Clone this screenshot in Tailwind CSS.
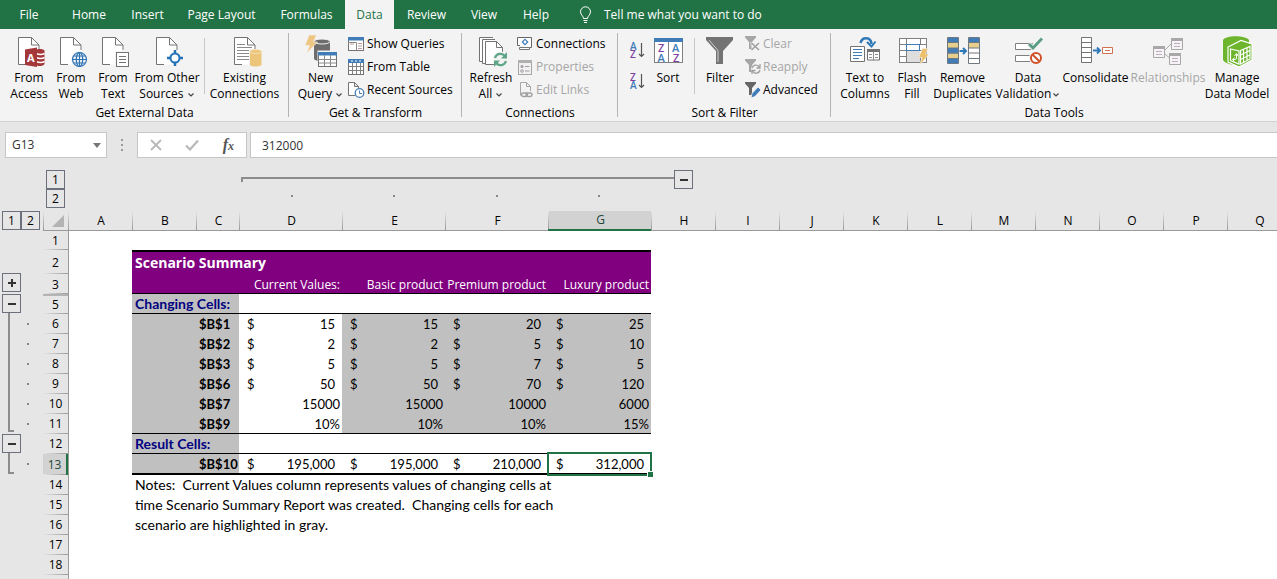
<!DOCTYPE html>
<html lang="en">
<head>
<meta charset="utf-8">
<title>Scenario Summary</title>
<script src="https://cdn.jsdelivr.net/npm/@tailwindcss/browser@4"></script>
</head>
<body class="flex h-screen flex-col overflow-hidden bg-[#e6e6e6] font-['Open_Sans','Noto_Sans',sans-serif] text-xs text-black">

<svg class="hidden">
  <defs>
    <symbol id="page" viewBox="0 0 32 32"><path d="M5.5 1.5H18.5L26.500 9.500V28.500H5.500Z" fill="#fff"/><path d="M5.500 28.500V1.500H18.500L26 9V14M18.500 1.500V9H26M5.500 28.500H13" fill="none" stroke="#737373"/></symbol>
    <symbol id="funnel" viewBox="0 0 16 16"><path d="M0 0H11V1.500L7 6V13H4V6L0 1.500Z"/></symbol>
    <symbol id="down" viewBox="0 0 8 6"><path d="M1.500 1.500L4 4L6.500 1.500" fill="none" stroke="#444" stroke-width="1.200"/></symbol>
  </defs>
</svg>

<nav class="flex h-[29px] shrink-0 items-stretch bg-[#217346] text-white">
  <button class="w-[58px]">File</button>
  <button class="w-[62px]">Home</button>
  <button class="w-[55px]">Insert</button>
  <button class="w-[93px]">Page Layout</button>
  <button class="w-[77px]">Formulas</button>
  <button class="w-[49px] bg-[#f3f3f3] text-[#217346]">Data</button>
  <button class="w-[65px]">Review</button>
  <button class="w-[50px]">View</button>
  <button class="w-[54px]">Help</button>
  <button class="flex items-center gap-3 pl-4">
    <svg class="h-[18px] w-[13px]" viewBox="0 0 13 18" fill="none" stroke="#fff"><path d="M4.500 12.500C4.500 10 1.500 9 1.500 5.800A5 5 0 0 1 11.500 5.800C11.500 9 8.500 10 8.500 12.500ZM4.500 14.500H8.500M5 16.500H8"/></svg>
    <span>Tell me what you want to do</span>
  </button>
</nav>

<div class="flex h-[93px] shrink-0 border-b border-[#d2d2d2] bg-[#f3f3f3] leading-4">

  <section class="flex w-[289px] shrink-0 flex-col" aria-label="Get External Data">
    <div class="flex h-[76px] pl-2 pt-[7px]">
      <button class="flex w-[42px] flex-col items-center gap-[2px] whitespace-nowrap">
        <svg class="size-8 shrink-0 overflow-visible" viewBox="0 0 32 32"><use href="#page"/><path d="M23 14C25 12.500 30 12.500 31.500 14.500V28C30 30.500 25 30.500 23 29Z" fill="#a4373a"/><path d="M23 17.500Q28 19.500 31.500 17.500M23 21.500Q28 23.500 31.500 21.500M23 25.500Q28 27.500 31.500 25.500" stroke="#fff" stroke-width="1.500" fill="none"/><path d="M12 13.500L24 11.500V31L12 29Z" fill="#a4373a"/><text x="14" y="26" font-size="11" font-weight="700" fill="#fff">A</text></svg>
        <span>From<br>Access</span></button>
      <button class="flex w-[42px] flex-col items-center gap-[2px] whitespace-nowrap">
        <svg class="size-8 shrink-0 overflow-visible" viewBox="0 0 32 32"><use href="#page"/><circle cx="24.500" cy="23.500" r="8.500" fill="#f3f3f3"/><g fill="none" stroke="#2e75b6" stroke-width="1.200"><circle cx="24.500" cy="23.500" r="7"/><ellipse cx="24.500" cy="23.500" rx="3.200" ry="7"/><path d="M24.500 16.500V30.500M17.500 23.500H31.500M18.500 20H30.500M18.500 27H30.500"/></g></svg>
        <span>From<br>Web</span></button>
      <button class="flex w-[42px] flex-col items-center gap-[2px] whitespace-nowrap">
        <svg class="size-8 shrink-0 overflow-visible" viewBox="0 0 32 32"><use href="#page"/><path d="M18 15H32V31H18Z" fill="#f3f3f3"/><rect x="19.500" y="16.500" width="12" height="14" fill="#fff" stroke="#737373"/><path d="M22 20.500H29M22 23.500H29M22 26.500H29" stroke="#737373"/></svg>
        <span>From<br>Text</span></button>
      <button class="flex w-[66px] flex-col items-center gap-[2px] whitespace-nowrap">
        <svg class="size-8 shrink-0 overflow-visible" viewBox="0 0 32 32"><use href="#page"/><circle cx="24" cy="22" r="6.500" fill="#f3f3f3"/><g stroke="#2272b9" stroke-width="2" fill="none"><circle cx="24" cy="22" r="4.500" fill="#fff"/><path d="M24 14V18M24 26V30M16 22H20M28 22H32" stroke-width="2.500"/></g></svg>
        <span>From Other<br>Sources <svg class="inline h-[6px] w-2"><use href="#down"/></svg></span></button>
      <span class="mx-1 mt-[2px] h-14 w-px bg-[#c8c8c8]"></span>
      <button class="flex w-[71px] flex-col items-center gap-[2px] whitespace-nowrap">
        <svg class="size-8 shrink-0 overflow-visible" viewBox="0 0 32 32"><use href="#page"/><path d="M8 8.500H16M8 11.500H23M8 14.500H20M8 17.500H20M8 20.500H20M8 23.500H20" stroke="#8a8a8a"/><path d="M20 13H33V31H20Z" fill="#f3f3f3"/><path d="M21 15.500V29C23 31 30 31 32.500 29V15.500Z" fill="#ecc57a"/><ellipse cx="26.750" cy="15.500" rx="5.750" ry="2" fill="#ecc57a" stroke="#f8e6c0" stroke-width=".8"/></svg>
        <span>Existing<br>Connections</span></button>
    </div>
    <h2 class="pt-px text-center">Get External Data</h2>
  </section>
  <span class="-ml-px mt-1 h-[84px] w-px shrink-0 bg-[#b4b4b4]"></span>

  <section class="flex w-[173px] shrink-0 flex-col" aria-label="Get and Transform">
    <div class="flex h-[76px] pl-[10px]">
      <button class="flex w-[43px] flex-col items-center gap-[2px] whitespace-nowrap pt-[7px]">
        <svg class="size-8 shrink-0 overflow-visible" viewBox="0 0 32 32"><path d="M9 5V23C11 26 23 26 25 23V5Z" fill="#6d6d6d"/><ellipse cx="17" cy="5.500" rx="8" ry="2.500" fill="#6d6d6d" stroke="#f3f3f3"/><path d="M4-1H11.500L8.500 6H12.500L1.500 17.500L4.500 9.500H0Z" fill="#eec684" stroke="#f3f3f3" stroke-width=".6"/><path d="M12.500 14.500H33V32H12.500Z" fill="#f3f3f3"/><rect x="13.500" y="16.500" width="18" height="14" fill="#fff" stroke="#737373"/><path d="M13 16H32V19.500H13Z" fill="#3f7cb8"/><path d="M19.500 19V30M25.500 19V30M14 23.500H31M14 27H31" stroke="#8a8a8a"/></svg>
        <span>New<br>Query <svg class="inline h-[6px] w-2"><use href="#down"/></svg></span></button>
      <div class="ml-[6px] flex flex-col pt-[3px]">
        <button class="flex h-[23px] items-center gap-[3px] whitespace-nowrap"><svg class="size-4" viewBox="0 0 16 16"><rect x=".5" y="1.500" width="15" height="13" fill="#fff" stroke="#737373"/><path d="M0 1H16V4.500H0Z" fill="#3f7cb8"/><path d="M2 8H6M10 7.500H14M10 10H14M10 12.500H14" stroke="#b99a9a"/><path d="M0 6.500H8.500V14" fill="none" stroke="#8a8a8a"/></svg>Show Queries</button>
        <button class="flex h-[23px] items-center gap-[3px] whitespace-nowrap"><svg class="size-4" viewBox="0 0 16 16"><rect x=".5" y=".5" width="15" height="15" fill="#fff" stroke="#737373"/><path d="M0 0H16V4H0Z" fill="#3f7cb8"/><path d="M4.500 4V15M8.500 4V15M12.500 4V15M1 7.500H15M1 11.500H15" stroke="#808080"/><path d="M3 2H5M7 2H9M11 2H13" stroke="#fff"/></svg>From Table</button>
        <button class="flex h-[23px] items-center gap-[3px] whitespace-nowrap"><svg class="size-4 overflow-visible" viewBox="0 0 16 16"><path d="M7 13.500H.5V.5H6.500L10.500 4.500V6M6.500 .5V4.500H10.500" fill="#fff" stroke="#737373"/><circle cx="11.500" cy="11" r="4.300" fill="#fff" stroke="#4a7fb5" stroke-width="1.300"/><path d="M11.500 8.500V11.500H14" fill="none" stroke="#4a7fb5"/></svg>Recent Sources</button>
      </div>
    </div>
    <h2 class="pt-px text-center">Get &amp; Transform</h2>
  </section>
  <span class="-ml-px mt-1 h-[84px] w-px shrink-0 bg-[#b4b4b4]"></span>

  <section class="flex w-[156px] shrink-0 flex-col" aria-label="Connections">
    <div class="flex h-[76px] pl-2">
      <button class="flex w-[42px] flex-col items-center gap-[2px] whitespace-nowrap pt-[7px]">
        <svg class="size-8 shrink-0 overflow-visible" viewBox="0 0 32 32"><g fill="#fff" stroke="#737373"><path d="M7 25.500H4.500V1.500H18"/><path d="M10 27.500H7.500V3.500H20"/><path d="M10.500 28.500V5.500H21.500L27.500 11.500V28.500Z"/><path d="M21.500 5.500V11.500H27.500" fill="none"/></g><circle cx="25.500" cy="23.500" r="8" fill="#f3f3f3"/><g fill="none" stroke="#5fa688" stroke-width="2.200"><path d="M20 22A5.700 5.700 0 0 1 30 20M31 25A5.700 5.700 0 0 1 21 27"/></g><path d="M32 16V22.500H26ZM19 31V24.500H25Z" fill="#5fa688"/></svg>
        <span>Refresh<br>All <svg class="inline h-[6px] w-2"><use href="#down"/></svg></span></button>
      <div class="ml-[5px] flex flex-col pt-[3px]">
        <button class="flex h-[23px] items-center gap-[3px] whitespace-nowrap"><svg class="size-4" viewBox="0 0 16 16"><path d="M3 9.500H.5V1.500H14.500V11.500H12" fill="#fff" stroke="#666"/><path d="M2.500 13.500V11.500H12.500V13.500Z" fill="#fff" stroke="#777"/><path d="M8 2.500L11.500 6L8 9.500L4.500 6Z" fill="#3f7cb8"/><circle cx="8" cy="6" r="1.400" fill="#fff"/></svg>Connections</button>
        <button disabled class="flex h-[23px] items-center gap-[3px] whitespace-nowrap text-[#a6a6a6]"><svg class="size-4" viewBox="0 0 16 16"><rect x="1.500" y="1.500" width="13" height="14" fill="#f3f0f3" stroke="#a6a6a6"/><path d="M1 1H15V4H1Z" fill="#b0b0b0"/><circle cx="5" cy="7.500" r="1.500" fill="#a0a0a0"/><circle cx="5" cy="12" r="1.300" fill="none" stroke="#a0a0a0"/><path d="M8 7.500H12.500M8 12H12.500" stroke="#a0a0a0"/></svg>Properties</button>
        <button disabled class="flex h-[23px] items-center gap-[3px] whitespace-nowrap text-[#a6a6a6]"><svg class="size-4" viewBox="0 0 16 16"><path d="M3.500 10V.5H9.500L13.500 4.500V9M9.500 .5V4.500H13.500M3.500 10V13.500" fill="none" stroke="#a6a6a6"/><g fill="none" stroke="#a0a0a0" stroke-width="1.500"><rect x="4.500" y="11" width="6" height="3.500" rx="1.700"/><rect x="9" y="11" width="6" height="3.500" rx="1.700"/></g></svg>Edit Links</button>
      </div>
    </div>
    <h2 class="pt-px text-center">Connections</h2>
  </section>
  <span class="-ml-px mt-1 h-[84px] w-px shrink-0 bg-[#b4b4b4]"></span>

  <section class="flex w-[213px] shrink-0 flex-col" aria-label="Sort and Filter">
    <div class="flex h-[76px] pl-3">
      <div class="flex flex-col gap-[14px] pt-[13px]">
        <button aria-label="Sort A to Z"><svg class="h-[17px] w-4 overflow-visible" viewBox="0 0 16 17" font-size="10" font-weight="600"><text x="0" y="8" fill="#3f7cb8">A</text><text x="0" y="16" fill="#7e3f9e">Z</text><path d="M11.500 1V14.500M9 12L11.500 14.500L14 12" fill="none" stroke="#555" stroke-width="1.200"/></svg></button>
        <button aria-label="Sort Z to A"><svg class="h-[17px] w-4 overflow-visible" viewBox="0 0 16 17" font-size="10" font-weight="600"><text x="0" y="8" fill="#7e3f9e">Z</text><text x="0" y="16" fill="#3f7cb8">A</text><path d="M11.500 1V14.500M9 12L11.500 14.500L14 12" fill="none" stroke="#555" stroke-width="1.200"/></svg></button>
      </div>
      <button class="ml-[5px] flex w-[34px] flex-col items-center gap-[2px] pt-[7px]">
        <svg class="size-8 shrink-0 overflow-visible" viewBox="0 0 32 32" font-size="11" font-weight="600"><rect x="2.500" y="2.500" width="28" height="24" fill="#fff" stroke="#808080"/><path d="M2 2H31V6H2Z" fill="#3f7cb8"/><path d="M16.500 6V26" stroke="#808080"/><text x="6" y="15.500" fill="#7e3f9e">Z</text><text x="5.500" y="25.500" fill="#3f7cb8">A</text><text x="20" y="15.500" fill="#3f7cb8">A</text><text x="21" y="25.500" fill="#7e3f9e">Z</text></svg>
        <span>Sort</span></button>
      <span class="ml-[9px] mt-[9px] h-14 w-px bg-[#c8c8c8]"></span>
      <button class="ml-[9px] flex w-8 flex-col items-center gap-[2px] pt-[7px]">
        <svg class="size-8 shrink-0" viewBox="0 0 32 32"><path d="M2 1H29V4L19 15V28H12V15L2 4Z" fill="#737373"/><path d="M5 4L14 14.500V26" fill="none" stroke="#d0d0d0"/></svg>
        <span>Filter</span></button>
      <div class="ml-[9px] flex flex-col pt-[3px]">
        <button disabled class="flex h-[23px] items-center gap-[2px] whitespace-nowrap text-[#a6a6a6]"><svg class="size-4" viewBox="0 0 16 16"><use href="#funnel" fill="#a6a6a6"/><path d="M5 6H16V16H7Z" fill="#f3f3f3" opacity=".6"/><path d="M6.500 7L14 14M14 7L6.500 14" stroke="#a0a0a0" stroke-width="1.600"/></svg>Clear</button>
        <button disabled class="flex h-[23px] items-center gap-[2px] whitespace-nowrap text-[#a6a6a6]"><svg class="size-4" viewBox="0 0 16 16"><use href="#funnel" fill="#a6a6a6"/><circle cx="11" cy="10" r="5" fill="#f3f3f3"/><path d="M7 9A4 4 0 0 1 14.500 8.500M15 11A4 4 0 0 1 7.500 12M15 5V9H11.500M7 15V11.500H10.500" fill="none" stroke="#a0a0a0" stroke-width="1.300"/></svg>Reapply</button>
        <button class="flex h-[23px] items-center gap-[2px] whitespace-nowrap"><svg class="size-4" viewBox="0 0 16 16"><use href="#funnel" fill="#666"/><path d="M6 16L7 11.500L13 5L16 8L10 14.500Z" fill="#3f7cb8" stroke="#f3f3f3" stroke-width=".8"/></svg>Advanced</button>
      </div>
    </div>
    <h2 class="pt-px text-center">Sort &amp; Filter</h2>
  </section>
  <span class="-ml-px mt-1 h-[84px] w-px shrink-0 bg-[#b4b4b4]"></span>

  <section class="flex grow flex-col" aria-label="Data Tools">
    <div class="flex h-[76px] pl-[9px] pt-[7px]">
      <button class="flex w-[50px] flex-col items-center gap-[2px] whitespace-nowrap">
        <svg class="size-8 shrink-0 overflow-visible" viewBox="0 0 32 32"><path d="M1.500 10.500H15.500V25.500H1.500Z" fill="#fff" stroke="#737373"/><path d="M4 13.500H13M4 16.500H13M4 19.500H13M4 22.500H10" stroke="#3f7cb8"/><path d="M18.500 13.500H30.500V24H18.500Z" fill="#fff" stroke="#737373"/><path d="M18 13H31V16H18Z" fill="#737373"/><path d="M24.500 16V24M20 18.500H23M26 18.500H29M20 21.500H23M26 21.500H29" stroke="#8a8a8a"/><path d="M11.500 7C13 .5 22 .5 22.500 8" fill="none" stroke="#2f78b8" stroke-width="2.500"/><path d="M18 6L22.500 10.500L26.500 5.500" fill="none" stroke="#2f78b8" stroke-width="2"/></svg>
        <span>Text to<br>Columns</span></button>
      <button class="ml-[2px] flex w-10 flex-col items-center gap-[2px] whitespace-nowrap">
        <svg class="size-8 shrink-0 overflow-visible" viewBox="0 0 32 32"><rect x="3.500" y="2.500" width="27" height="24" fill="#fff" stroke="#808080"/><path d="M3 8.500H31M3 14.500H31M3 20.500H31M10.500 2V27M24.500 2V8M24.500 20V27" stroke="#808080"/><rect x="10.500" y="8.500" width="13" height="6" fill="#fff" stroke="#3f7cb8"/><path d="M11 15H24V26H11Z" fill="#dedede"/><path d="M26.500 12.500H32L29.500 18H33L23.500 29.500L26 21.500H22.500Z" fill="#ecc06a" stroke="#f3f3f3" stroke-width=".6"/></svg>
        <span>Flash<br>Fill</span></button>
      <button class="ml-[2px] flex w-[57px] flex-col items-center gap-[2px] whitespace-nowrap">
        <svg class="size-8 shrink-0 overflow-visible" viewBox="0 0 32 32"><path d="M1 1.500H11V27.500H1Z" fill="#3f7cb8"/><path d="M1 7H11V12H1ZM1 17.500H11V22.500H1Z" fill="#e6cf8c"/><path d="M.5 1.500H11.500V27.500H.5ZM.5 6.500H11.500M.5 12H11.500M.5 17H11.500M.5 22.500H11.500" fill="none" stroke="#6f7780"/><path d="M22 1.500H32V27.500H22Z" fill="#fff"/><path d="M22 1.500H32V7H22Z" fill="#3f7cb8"/><path d="M22 7H32V12H22Z" fill="#e6cf8c"/><path d="M21.500 1.500H32.500V27.500H21.500ZM21.500 6.500H32.500M21.500 12H32.500M21.500 17H32.500M21.500 22.500H32.500" fill="none" stroke="#6f7780"/><path d="M12.500 15H19M16 12L19 15L16 18" fill="none" stroke="#2f78b8" stroke-width="2"/></svg>
        <span>Remove<br>Duplicates</span></button>
      <button class="ml-[5px] flex w-16 flex-col items-center gap-[2px] whitespace-nowrap">
        <svg class="size-8 shrink-0 overflow-visible" viewBox="0 0 32 32"><path d="M3.500 7.500H20.500V13.500H3.500ZM3.500 19.500H20.500V25.500H3.500Z" fill="#fff" stroke="#808080"/><path d="M16.500 8L21 12L30 2.500" fill="none" stroke="#f3f3f3" stroke-width="5"/><path d="M17 8L21 12L30 2.500" fill="none" stroke="#5a9c83" stroke-width="2.800"/><circle cx="24" cy="22" r="7" fill="#f3f3f3"/><circle cx="24" cy="22" r="5" fill="#fff" stroke="#cf4f27" stroke-width="2"/><path d="M20.500 18.500L27.500 25.500" stroke="#cf4f27" stroke-width="2"/></svg>
        <span>Data<br>Validation<svg class="ml-px inline h-[6px] w-2"><use href="#down"/></svg></span></button>
      <button class="ml-[3px] flex w-[65px] flex-col items-center gap-[2px] whitespace-nowrap">
        <svg class="size-8 shrink-0 overflow-visible" viewBox="0 0 32 32"><path d="M1.500 1.500H11.500V26.500H1.500ZM1.500 6.500H11.500M1.500 11.500H11.500M1.500 16.500H11.500M1.500 21.500H11.500" fill="#fff" stroke="#737373"/><path d="M13 14.500H20M17 11.500L20 14.500L17 17.500" fill="none" stroke="#2f78b8" stroke-width="1.800"/><path d="M22.500 11.500H32.500V17.500H22.500ZM25 14.500H30" fill="#fff" stroke="#d0704f"/></svg>
        <span>Consolidate</span></button>
      <button disabled class="ml-1 flex w-[72px] flex-col items-center gap-[2px] whitespace-nowrap text-[#a6a6a6]">
        <svg class="size-8 shrink-0 overflow-visible" viewBox="0 0 32 32" stroke="#a8a8a8"><path d="M12 15L19 8M12 17L17.500 22" fill="none"/><path d="M1.500 10.500H12.500V21.500H1.500ZM19.500 2.500H30.500V13.500H19.500ZM17.500 17.500H28.500V28.500H17.500Z" fill="#f6f2f6"/><path d="M1 11.500H13M19 3.500H31M17 18.500H29" stroke-width="3"/><path d="M4 15.500H10M4 18.500H10M22 7.500H28M22 10.500H28M20 22.500H26M20 25.500H26" stroke="#bcb0bc"/></svg>
        <span>Relationships</span></button>
      <button class="ml-[2px] flex w-[62px] flex-col items-center gap-[2px] whitespace-nowrap">
        <svg class="size-8 shrink-0 overflow-visible" viewBox="0 0 32 32"><path d="M2 4C5-1 24-1 28 4V24L12 29C8 28 4 27 2 24Z" fill="#6cb52d"/><path d="M7 11L20 4.500L31 8V24L18 31L7 26Z" fill="#6cb52d" stroke="#fff" stroke-width="1.200"/><path d="M9.500 13L18 15V28L9.500 24.500Z" fill="none" stroke="#fff" stroke-width="1.200"/><path d="M19.500 14.500L29 10.500V23L19.500 28ZM19.500 19L29 14.500M19.500 23.500L29 19M22.500 13.500V26.500M26 12V24.500" stroke="#fff" stroke-width="1.200" fill="none"/><path d="M15.500 18V22Q15.500 23.500 14 23.500H12M13.500 21.500L11.500 23.500L13.500 25.500M13.500 20L15.500 17.500L17 20" stroke="#fff" fill="none"/></svg>
        <span>Manage<br>Data Model</span></button>
    </div>
    <h2 class="pt-px text-center">Data Tools</h2>
  </section>
</div>

<div class="mt-[10px] flex h-[26px] shrink-0 items-stretch pl-[5px] text-[#333]">
  <div class="flex w-[102px] items-center border border-[#c6c6c6] bg-white pl-[6px] pr-[5px]">
    <input aria-label="Name box" value="G13" class="w-0 grow bg-transparent outline-none">
    <button aria-label="Choose a name"><svg class="h-[5px] w-2" viewBox="0 0 8 5"><path d="M0 0H8L4 5Z" fill="#777"/></svg></button>
  </div>
  <svg class="ml-[13px] w-1" viewBox="0 0 4 26" fill="#999"><path d="M1 7H3V9H1ZM1 12H3V14H1ZM1 17H3V19H1Z"/></svg>
  <div class="ml-[13px] flex w-[110px] items-center justify-between border border-[#c6c6c6] bg-white pl-3 pr-3">
    <button aria-label="Cancel"><svg class="h-3 w-3" viewBox="0 0 12 12"><path d="M1 1L11 11M11 1L1 11" stroke="#b8b8b8" stroke-width="1.800"/></svg></button>
    <button aria-label="Enter"><svg class="h-3 w-[14px]" viewBox="0 0 14 12"><path d="M1 6.500L5 10.500L13 1.500" fill="none" stroke="#b8b8b8" stroke-width="2.200"/></svg></button>
    <button aria-label="Insert function" class="font-['Liberation_Serif',serif] text-base font-bold italic leading-5 text-[#555]">f<span class="text-xs">x</span></button>
  </div>
  <input aria-label="Formula bar" value="312000" class="ml-[3px] w-0 grow border border-r-0 border-[#c6c6c6] bg-white pl-[11px] pt-px outline-none">
</div>

<div class="flex h-[53px] shrink-0 items-start pl-[46px] pt-[12px] leading-[17px]">
  <div class="flex w-[19px] flex-col">
    <button class="h-[19px] border border-[#6b707c]">1</button>
    <button class="h-[19px] border border-[#6b707c]">2</button>
  </div>
  <div class="ml-[176px] flex w-[433px] flex-col pt-[7px]">
    <span class="h-[5px] border-l-2 border-t-2 border-[#8c8c8c]"></span>
    <div class="flex justify-around pr-6 pt-[13px]">
      <span class="size-[2px] bg-[#888]"></span><span class="size-[2px] bg-[#888]"></span><span class="size-[2px] bg-[#888]"></span><span class="size-[2px] bg-[#888]"></span>
    </div>
  </div>
  <button aria-label="Collapse columns D to G" class="flex size-[19px] items-center justify-center border border-[#6b707c]"><span class="h-[2px] w-2 bg-[#333]"></span></button>
</div>

<div class="flex min-h-0 grow overflow-hidden">
  <aside class="w-[43px] shrink-0 pl-[2px] leading-[17px]" aria-label="Row outline">
    <div class="flex">
      <button class="size-[19px] border border-[#6b707c]">1</button>
      <button class="size-[19px] border border-[#6b707c]">2</button>
    </div>
    <button aria-label="Expand row 4" class="mt-[43px] flex size-[19px] items-center justify-center border border-[#6b707c]"><svg class="size-2" viewBox="0 0 8 8"><path d="M0 4H8M4 0V8" stroke="#333" stroke-width="2"/></svg></button>
    <button aria-label="Collapse rows 6 to 11" class="mt-[2px] flex size-[19px] items-center justify-center border border-[#6b707c]"><span class="h-[2px] w-2 bg-[#333]"></span></button>
    <div class="flex gap-[13px] pl-[6px]">
      <span class="h-[119px] w-[6px] border-b-2 border-l-2 border-[#8c8c8c]"></span>
      <div class="flex h-[119px] flex-col gap-[18px] pt-[10px]">
        <span class="size-[2px] bg-[#888]"></span><span class="size-[2px] bg-[#888]"></span><span class="size-[2px] bg-[#888]"></span><span class="size-[2px] bg-[#888]"></span><span class="size-[2px] bg-[#888]"></span><span class="size-[2px] bg-[#888]"></span>
      </div>
    </div>
    <button aria-label="Collapse row 13" class="mt-[2px] flex size-[19px] items-center justify-center border border-[#6b707c]"><span class="h-[2px] w-2 bg-[#333]"></span></button>
    <div class="flex items-center gap-[13px] pl-[6px]">
      <span class="h-[21px] w-[6px] border-b-2 border-l-2 border-[#8c8c8c]"></span><span class="size-[2px] bg-[#888]"></span>
    </div>
  </aside>

  <div class="min-w-0 grow overflow-hidden bg-white">
  <table class="w-[1248px] table-fixed border-separate border-spacing-0 font-[Lato,sans-serif] text-[13px] leading-[18px] [&_td]:p-0 [&_th]:p-0 [&_thead_th]:pl-[2px] [&_th]:font-['Open_Sans',sans-serif] [&_th]:text-xs [&_th]:font-normal [&_thead_th]:border-b [&_thead_th]:border-[#9a9a9a] [&_thead_th]:bg-[#e6e6e6] [&_thead_th]:bg-[linear-gradient(to_bottom,#e6e6e6,#999)] [&_thead_th]:bg-[length:1px_100%] [&_thead_th]:bg-left [&_thead_th]:bg-no-repeat [&_tbody_th]:bg-[#e6e6e6] [&_tbody_th]:bg-[linear-gradient(to_right,#e6e6e6,#999)] [&_tbody_th]:bg-[length:100%_1px] [&_tbody_th]:bg-bottom [&_tbody_th]:bg-no-repeat [&_tbody_th+td]:border-l [&_tbody_th+td]:border-[#9a9a9a] [&_td]:overflow-hidden [&_td]:whitespace-nowrap">
    <colgroup><col class="w-[25px]"><col class="w-16"><col class="w-16"><col class="w-[43px]"><col class="w-[103px]"><col class="w-[103px]"><col class="w-[103px]"><col class="w-[103px]"><col class="w-16"><col class="w-16"><col class="w-16"><col class="w-16"><col class="w-16"><col class="w-16"><col class="w-16"><col class="w-16"><col class="w-16"><col class="w-16"></colgroup>
    <thead><tr class="h-5">
      <th><svg class="ml-auto mr-1 size-3" viewBox="0 0 12 12" role="img" aria-label="Select all"><path d="M12 0V12H0Z" fill="#b4b4b4"/></svg></th>
      <th>A</th><th>B</th><th>C</th><th>D</th><th>E</th><th>F</th>
      <th class="border-b-2! border-[#217346]! bg-[#d2d2d2]!"><span class="text-[#24483a]">G</span></th>
      <th>H</th><th>I</th><th>J</th><th>K</th><th>L</th><th>M</th><th>N</th><th>O</th><th>P</th><th>Q</th>
    </tr></thead>
    <tbody class="[&_th]:leading-[18px]">
      <tr class="h-[19px]"><th class="pt-px!">1</th><td></td><td colspan="16"></td></tr>
      <tr class="h-6"><th class="pt-[2px]!">2</th><td></td><td colspan="6" class="border-t-2 border-black bg-[#800080] pl-[3px]! font-['Open_Sans',sans-serif] text-sm leading-[18px]! font-bold text-white">Scenario Summary</td><td colspan="10"></td></tr>
      <tr class="h-5 font-['Open_Sans',sans-serif] text-xs [&_td]:align-bottom [&_td]:leading-[17px]"><th class="pt-[2px]!">3</th><td></td>
        <td colspan="2" class="border-b border-black bg-[#800080]"></td>
        <td class="border-b border-black bg-[#800080] pr-[2px]! text-right text-white">Current Values:</td>
        <td class="border-b border-black bg-[#800080] pr-[2px]! text-right text-white">Basic product</td>
        <td class="border-b border-black bg-[#800080] pr-[2px]! text-right text-white">Premium product</td>
        <td class="border-b border-black bg-[#800080] pr-[2px]! text-right text-white">Luxury product</td><td colspan="10"></td></tr>
      <tr class="h-5"><th class="border-t-2 border-[#b4b4b4]">5</th><td></td><td colspan="2" class="border-b border-black bg-[#c0c0c0] pl-[3px]! text-sm leading-[18px]! font-bold text-[#000080]">Changing Cells:</td><td colspan="4" class="border-b border-black"></td><td colspan="10"></td></tr>

      <tr class="h-5"><th>6</th><td></td><td class="bg-[#c0c0c0]"></td><td class="bg-[#c0c0c0] pl-[3px]! font-bold">$B$1</td>
        <td><div class="flex justify-between pl-2 pr-[7px]"><span>$</span><span>15</span></div></td>
        <td class="bg-[#c0c0c0]"><div class="flex justify-between pl-2 pr-[7px]"><span>$</span><span>15</span></div></td>
        <td class="bg-[#c0c0c0]"><div class="flex justify-between pl-2 pr-[7px]"><span>$</span><span>20</span></div></td>
        <td class="bg-[#c0c0c0]"><div class="flex justify-between pl-2 pr-[7px]"><span>$</span><span>25</span></div></td><td colspan="10"></td></tr>
      <tr class="h-5"><th>7</th><td></td><td class="bg-[#c0c0c0]"></td><td class="bg-[#c0c0c0] pl-[3px]! font-bold">$B$2</td>
        <td><div class="flex justify-between pl-2 pr-[7px]"><span>$</span><span>2</span></div></td>
        <td class="bg-[#c0c0c0]"><div class="flex justify-between pl-2 pr-[7px]"><span>$</span><span>2</span></div></td>
        <td class="bg-[#c0c0c0]"><div class="flex justify-between pl-2 pr-[7px]"><span>$</span><span>5</span></div></td>
        <td class="bg-[#c0c0c0]"><div class="flex justify-between pl-2 pr-[7px]"><span>$</span><span>10</span></div></td><td colspan="10"></td></tr>
      <tr class="h-5"><th>8</th><td></td><td class="bg-[#c0c0c0]"></td><td class="bg-[#c0c0c0] pl-[3px]! font-bold">$B$3</td>
        <td><div class="flex justify-between pl-2 pr-[7px]"><span>$</span><span>5</span></div></td>
        <td class="bg-[#c0c0c0]"><div class="flex justify-between pl-2 pr-[7px]"><span>$</span><span>5</span></div></td>
        <td class="bg-[#c0c0c0]"><div class="flex justify-between pl-2 pr-[7px]"><span>$</span><span>7</span></div></td>
        <td class="bg-[#c0c0c0]"><div class="flex justify-between pl-2 pr-[7px]"><span>$</span><span>5</span></div></td><td colspan="10"></td></tr>
      <tr class="h-5"><th>9</th><td></td><td class="bg-[#c0c0c0]"></td><td class="bg-[#c0c0c0] pl-[3px]! font-bold">$B$6</td>
        <td><div class="flex justify-between pl-2 pr-[7px]"><span>$</span><span>50</span></div></td>
        <td class="bg-[#c0c0c0]"><div class="flex justify-between pl-2 pr-[7px]"><span>$</span><span>50</span></div></td>
        <td class="bg-[#c0c0c0]"><div class="flex justify-between pl-2 pr-[7px]"><span>$</span><span>70</span></div></td>
        <td class="bg-[#c0c0c0]"><div class="flex justify-between pl-2 pr-[7px]"><span>$</span><span>120</span></div></td><td colspan="10"></td></tr>
      <tr class="h-5"><th>10</th><td></td><td class="bg-[#c0c0c0]"></td><td class="bg-[#c0c0c0] pl-[3px]! font-bold">$B$7</td>
        <td class="pr-[2px]! text-right">15000</td><td class="bg-[#c0c0c0] pr-[2px]! text-right">15000</td><td class="bg-[#c0c0c0] pr-[2px]! text-right">10000</td><td class="bg-[#c0c0c0] pr-[2px]! text-right">6000</td><td colspan="10"></td></tr>
      <tr class="h-5"><th>11</th><td></td><td class="border-b border-black bg-[#c0c0c0]"></td><td class="border-b border-black bg-[#c0c0c0] pl-[3px]! font-bold">$B$9</td>
        <td class="border-b border-black pr-[2px]! text-right">10%</td><td class="border-b border-black bg-[#c0c0c0] pr-[2px]! text-right">10%</td><td class="border-b border-black bg-[#c0c0c0] pr-[2px]! text-right">10%</td><td class="border-b border-black bg-[#c0c0c0] pr-[2px]! text-right">15%</td><td colspan="10"></td></tr>
      <tr class="h-5"><th>12</th><td></td><td colspan="2" class="border-b border-black bg-[#c0c0c0] pl-[3px]! text-sm leading-[18px]! font-bold text-[#000080]">Result Cells:</td><td colspan="4" class="border-b border-black"></td><td colspan="10"></td></tr>
      <tr class="h-[21px]"><th class="border-r-2 border-[#217346] bg-[#d2d2d2]! text-[#24483a]">13</th><td></td><td class="border-b-2 border-black bg-[#c0c0c0]"></td><td class="border-b-2 border-black bg-[#c0c0c0] pl-[3px]! font-bold">$B$10</td>
        <td class="border-b-2 border-black"><div class="flex justify-between pl-2 pr-[7px]"><span>$</span><span>195,000</span></div></td>
        <td class="border-b-2 border-black"><div class="flex justify-between pl-2 pr-[7px]"><span>$</span><span>195,000</span></div></td>
        <td class="border-b-2 border-black"><div class="flex justify-between pl-2 pr-[7px]"><span>$</span><span>210,000</span></div></td>
        <td class="relative overflow-visible! border-b-2 border-black"><div class="flex justify-between pl-2 pr-[7px]"><span>$</span><span>312,000</span></div><span class="absolute -inset-x-px -bottom-[3px] -top-[2px] border-2 border-[#217346]"></span><span class="absolute -bottom-1 -right-[2px] size-[6px] border-l border-t border-white bg-[#217346]"></span></td><td colspan="10"></td></tr>
      <tr class="h-5"><th>14</th><td></td><td colspan="16" class="pl-[3px]! text-sm leading-[18px]!">Notes:&nbsp; Current Values column represents values of changing cells at</td></tr>
      <tr class="h-5"><th>15</th><td></td><td colspan="16" class="pl-[3px]! text-sm leading-[18px]!">time Scenario Summary Report was created.&nbsp; Changing cells for each</td></tr>
      <tr class="h-5"><th>16</th><td></td><td colspan="16" class="pl-[3px]! text-sm leading-[18px]!">scenario are highlighted in gray.</td></tr>
      <tr class="h-5"><th>17</th><td></td><td colspan="16"></td></tr>
      <tr class="h-5"><th>18</th><td></td><td colspan="16"></td></tr>
      <tr class="h-5"><th></th><td></td><td colspan="16"></td></tr>
    </tbody>
  </table>
  </div>
</div>
</body>
</html>
